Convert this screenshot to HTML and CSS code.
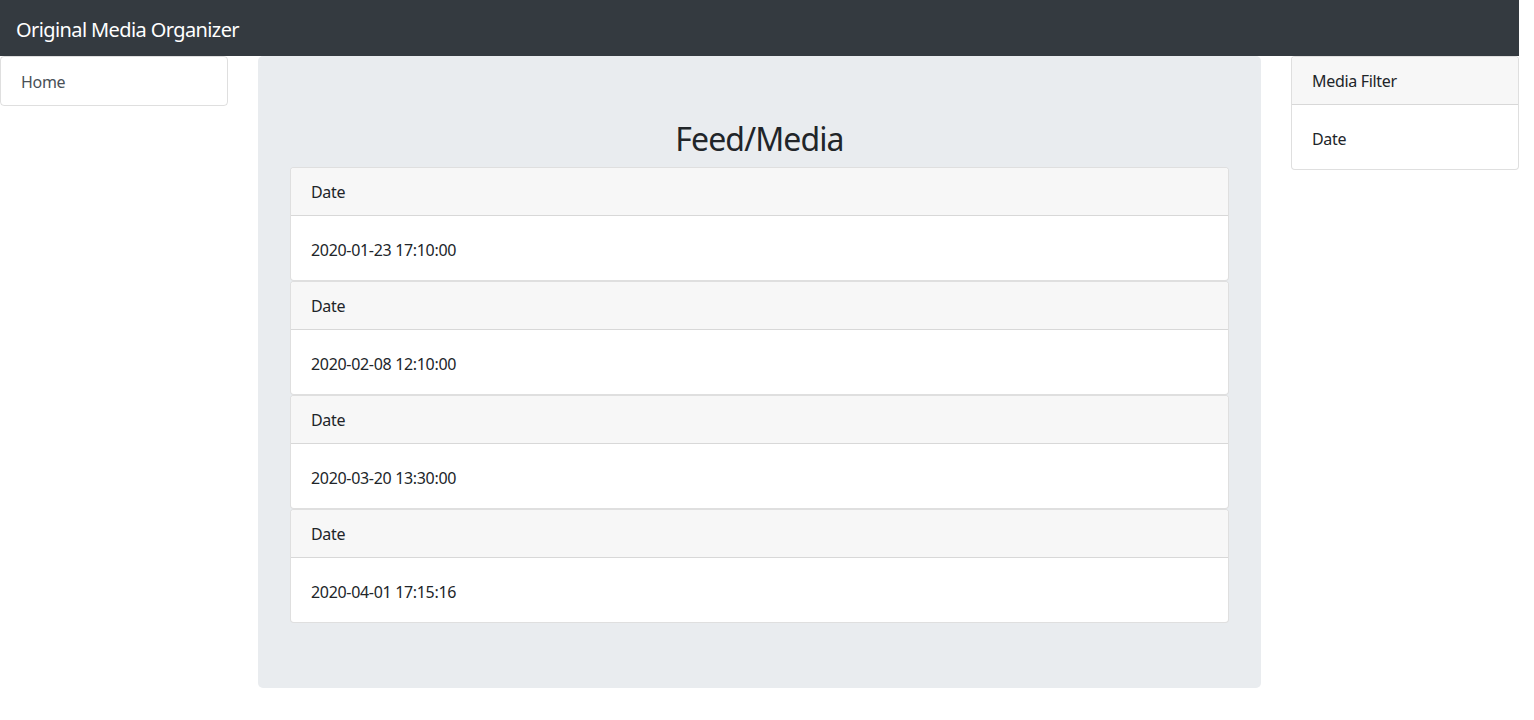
FILE: index.html
```html
<!DOCTYPE html>
<html lang="en">
<head>
<meta charset="utf-8">
<title>Original Media Organizer</title>
<link rel="stylesheet" href="styles.css">
</head>
<body>
<div class="page">
  <nav class="navbar">
    <span class="brand">Original Media Organizer</span>
  </nav>
  <div class="layout">
    <aside class="side-left">
      <div class="list-group">
        <a class="list-item" href="#">Home</a>
      </div>
    </aside>
    <main class="jumbotron">
      <h2 class="title">Feed/Media</h2>
      <div class="card">
        <div class="card-header">Date</div>
        <div class="card-body">2020-01-23 17:10:00</div>
      </div>
      <div class="card">
        <div class="card-header">Date</div>
        <div class="card-body">2020-02-08 12:10:00</div>
      </div>
      <div class="card">
        <div class="card-header">Date</div>
        <div class="card-body">2020-03-20 13:30:00</div>
      </div>
      <div class="card">
        <div class="card-header">Date</div>
        <div class="card-body">2020-04-01 17:15:16</div>
      </div>
    </main>
    <aside class="side-right">
      <div class="card">
        <div class="card-header">Media Filter</div>
        <div class="card-body">Date</div>
      </div>
    </aside>
  </div>
</div>
</body>
</html>
```

FILE: styles.css
```css
* { box-sizing: border-box; }
html, body { margin: 0; padding: 0; background: #fff; }
body {
  font-family: "Noto Sans", "Open Sans", sans-serif;
  font-size: 16px;
  line-height: 1.5;
  color: #212529;
  letter-spacing: -0.02em;
}
.page { width: 1519px; }
.navbar {
  height: 56px;
  background: #343a40;
  display: flex;
  align-items: center;
  padding: 0 16px;
}
.brand {
  color: #fff;
  font-size: 20px;
  line-height: 30px;
  letter-spacing: -0.03em;
  margin-top: 4px;
}
.layout {
  display: flex;
  align-items: flex-start;
  gap: 30px;
}
.side-left, .side-right { width: 228px; flex: none; }
.list-group {
  border: 1px solid rgba(0,0,0,.125);
  border-radius: 4px;
}
.list-item {
  display: block;
  padding: 13px 20px 11px;
  color: #495057;
  text-decoration: none;
  line-height: 24px;
}
.jumbotron {
  flex: 1;
  background: #e9ecef;
  border-radius: 5px;
  padding: 64px 32px 65px;
}
.title {
  margin: 0 0 9px;
  text-align: center;
  font-size: 32px;
  font-weight: 400;
  line-height: 38.4px;
  letter-spacing: -0.028em;
}
.card {
  background: #fff;
  border: 1px solid rgba(0,0,0,.125);
  border-radius: 4px;
  overflow: hidden;
}
.card-header {
  background: #f7f7f7;
  border-bottom: 1px solid rgba(0,0,0,.125);
  padding: 13px 20px 11px;
  line-height: 23px;
}
.card-body {
  padding: 22px 20px 18px;
  line-height: 24px;
}
```
